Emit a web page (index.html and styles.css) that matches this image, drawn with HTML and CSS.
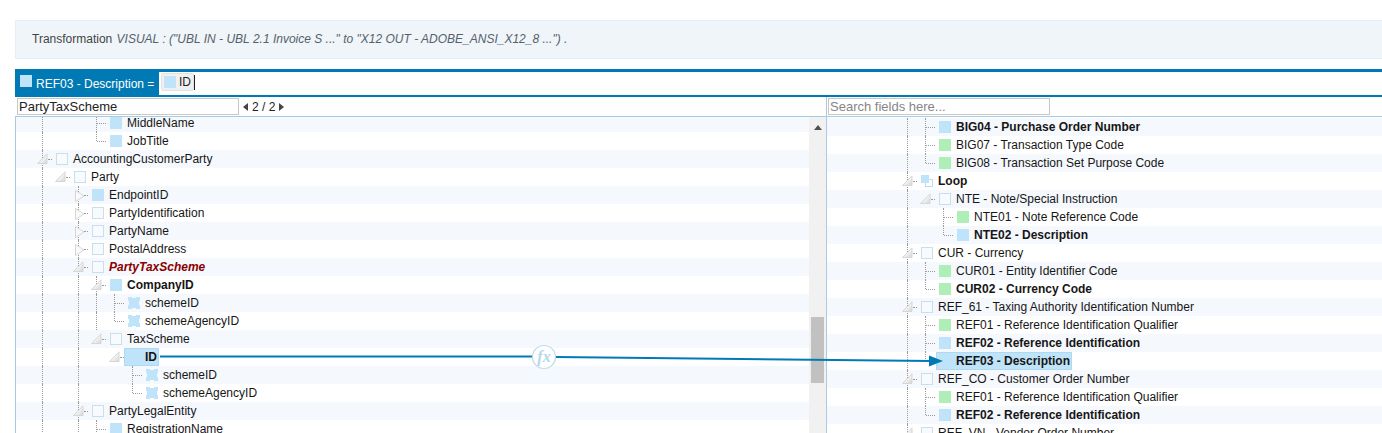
FILE: index.html
```html
<!DOCTYPE html>
<html lang="en">
<head>
<meta charset="utf-8">
<title>Transformation mapping</title>
<link rel="stylesheet" href="styles.css">
</head>
<body>
<svg class="defs" width="0" height="0" aria-hidden="true">
  <defs>
    <linearGradient id="tg" x1="0" y1="0" x2="1" y2="1"><stop offset="0.35" stop-color="#ffffff"/><stop offset="1" stop-color="#d4d4d4"/></linearGradient>
    <symbol id="down" viewBox="0 0 11 11"><path d="M.5 10.5 10 .8v9.7z" fill="url(#tg)" stroke="#d6d6d6"/></symbol>
    <symbol id="right" viewBox="0 0 10 12"><path d="M.5.5 9 6 .5 11.5z" fill="#fafafa" stroke="#d6d6d6"/></symbol>
    <symbol id="attr" viewBox="0 0 12 12"><path d="M0 0h4v1h4V0h4v4h-1v4h1v4H8v-1H4v1H0V8h1V4H0z" fill="#bfe3f8"/></symbol>
    <symbol id="loop" viewBox="0 0 12 12"><rect x="4.5" y="4.5" width="7" height="7" fill="#fff" stroke="#bcdcef"/><rect width="8" height="8" fill="#bfe3f8"/></symbol>
  </defs>
</svg>

<section class="info">Transformation <em>VISUAL : ("UBL IN - UBL 2.1 Invoice S ..." to "X12 OUT - ADOBE_ANSI_X12_8 ...") .</em></section>

<section class="formula">
  <div class="target"><span class="ic blue"></span>REF03 - Description =</div>
  <div class="expr"><span class="chip"><span class="ic blue"></span>ID</span><span class="caret"></span></div>
</section>

<section class="searches">
  <div class="search-left">
    <input class="field" type="text" value="PartyTaxScheme">
    <span class="pager"><svg width="5" height="8" viewBox="0 0 5 8"><path d="M5 0v8L0 4z" fill="#444"/></svg><span>2 / 2</span><svg width="5" height="8" viewBox="0 0 5 8"><path d="M0 0v8l5-4z" fill="#444"/></svg></span>
  </div>
  <div class="search-right"><input class="field" type="text" placeholder="Search fields here..."></div>
</section>

<main class="panes">
  <div class="pane-left">
    <div class="tree tree-l">
      <div class="row"><i class="c v"></i><i class="c"></i><i class="c"></i><i class="c t"></i><span class="ic blue"></span><span class="lb">MiddleName</span></div>
      <div class="row"><i class="c v"></i><i class="c"></i><i class="c"></i><i class="c e"></i><span class="ic blue"></span><span class="lb">JobTitle</span></div>
      <div class="row"><i class="c v tg"><svg class="td"><use href="#down"/></svg></i><span class="ic empty"></span><span class="lb">AccountingCustomerParty</span></div>
      <div class="row"><i class="c v"></i><i class="c tg"><svg class="td"><use href="#down"/></svg></i><span class="ic empty"></span><span class="lb">Party</span></div>
      <div class="row"><i class="c v"></i><i class="c"></i><i class="c v tg"><svg class="tr"><use href="#right"/></svg></i><span class="ic blue"></span><span class="lb">EndpointID</span></div>
      <div class="row"><i class="c v"></i><i class="c"></i><i class="c v tg"><svg class="tr"><use href="#right"/></svg></i><span class="ic empty"></span><span class="lb">PartyIdentification</span></div>
      <div class="row"><i class="c v"></i><i class="c"></i><i class="c v tg"><svg class="tr"><use href="#right"/></svg></i><span class="ic empty"></span><span class="lb">PartyName</span></div>
      <div class="row"><i class="c v"></i><i class="c"></i><i class="c v tg"><svg class="tr"><use href="#right"/></svg></i><span class="ic empty"></span><span class="lb">PostalAddress</span></div>
      <div class="row"><i class="c v"></i><i class="c"></i><i class="c v tg"><svg class="td"><use href="#down"/></svg></i><span class="ic empty"></span><span class="lb found">PartyTaxScheme</span></div>
      <div class="row"><i class="c v"></i><i class="c"></i><i class="c v"></i><i class="c v tg"><svg class="td"><use href="#down"/></svg></i><span class="ic blue"></span><span class="lb req">CompanyID</span></div>
      <div class="row"><i class="c v"></i><i class="c"></i><i class="c v"></i><i class="c v"></i><i class="c t"></i><svg class="ic"><use href="#attr"/></svg><span class="lb">schemeID</span></div>
      <div class="row"><i class="c v"></i><i class="c"></i><i class="c v"></i><i class="c v"></i><i class="c e"></i><svg class="ic"><use href="#attr"/></svg><span class="lb">schemeAgencyID</span></div>
      <div class="row"><i class="c v"></i><i class="c"></i><i class="c v"></i><i class="c tg"><svg class="td"><use href="#down"/></svg></i><span class="ic empty"></span><span class="lb">TaxScheme</span></div>
      <div class="row"><i class="c v"></i><i class="c"></i><i class="c v"></i><i class="c"></i><i class="c tg"><svg class="td"><use href="#down"/></svg></i><span class="sel sel-l"><span class="ic blue"></span><span class="lb req">ID</span></span></div>
      <div class="row"><i class="c v"></i><i class="c"></i><i class="c v"></i><i class="c"></i><i class="c"></i><i class="c t"></i><svg class="ic"><use href="#attr"/></svg><span class="lb">schemeID</span></div>
      <div class="row"><i class="c v"></i><i class="c"></i><i class="c v"></i><i class="c"></i><i class="c"></i><i class="c e"></i><svg class="ic"><use href="#attr"/></svg><span class="lb">schemeAgencyID</span></div>
      <div class="row"><i class="c v"></i><i class="c"></i><i class="c v tg"><svg class="td"><use href="#down"/></svg></i><span class="ic empty"></span><span class="lb">PartyLegalEntity</span></div>
      <div class="row"><i class="c v"></i><i class="c"></i><i class="c v"></i><i class="c t"></i><span class="ic blue"></span><span class="lb">RegistrationName</span></div>
    </div>
    <div class="scrollbar"><svg class="up" width="8" height="5" viewBox="0 0 8 5"><path d="M4 0l4 5H0z" fill="#505050"/></svg><div class="thumb"></div></div>
  </div>
  <div class="tree tree-r">
    <div class="row"><i class="c v"></i><i class="c t"></i><span class="ic blue"></span><span class="lb req">BIG04 - Purchase Order Number</span></div>
    <div class="row"><i class="c v"></i><i class="c t"></i><span class="ic green"></span><span class="lb">BIG07 - Transaction Type Code</span></div>
    <div class="row"><i class="c v"></i><i class="c e"></i><span class="ic green"></span><span class="lb">BIG08 - Transaction Set Purpose Code</span></div>
    <div class="row"><i class="c v tg"><svg class="td"><use href="#down"/></svg></i><svg class="ic"><use href="#loop"/></svg><span class="lb req">Loop</span></div>
    <div class="row"><i class="c v"></i><i class="c tg"><svg class="td"><use href="#down"/></svg></i><span class="ic empty"></span><span class="lb">NTE - Note/Special Instruction</span></div>
    <div class="row"><i class="c v"></i><i class="c"></i><i class="c t"></i><span class="ic green"></span><span class="lb">NTE01 - Note Reference Code</span></div>
    <div class="row"><i class="c v"></i><i class="c"></i><i class="c e"></i><span class="ic blue"></span><span class="lb req">NTE02 - Description</span></div>
    <div class="row"><i class="c v tg"><svg class="td"><use href="#down"/></svg></i><span class="ic empty"></span><span class="lb">CUR - Currency</span></div>
    <div class="row"><i class="c v"></i><i class="c t"></i><span class="ic green"></span><span class="lb">CUR01 - Entity Identifier Code</span></div>
    <div class="row"><i class="c v"></i><i class="c e"></i><span class="ic green"></span><span class="lb req">CUR02 - Currency Code</span></div>
    <div class="row"><i class="c v tg"><svg class="td"><use href="#down"/></svg></i><span class="ic empty"></span><span class="lb">REF_61 - Taxing Authority Identification Number</span></div>
    <div class="row"><i class="c v"></i><i class="c t"></i><span class="ic green"></span><span class="lb">REF01 - Reference Identification Qualifier</span></div>
    <div class="row"><i class="c v"></i><i class="c t"></i><span class="ic blue"></span><span class="lb req">REF02 - Reference Identification</span></div>
    <div class="row"><i class="c v"></i><i class="c e"></i><span class="sel sel-r"><span class="ic blue"></span><span class="lb req">REF03 - Description</span></span></div>
    <div class="row"><i class="c v tg"><svg class="td"><use href="#down"/></svg></i><span class="ic empty"></span><span class="lb">REF_CO - Customer Order Number</span></div>
    <div class="row"><i class="c v"></i><i class="c t"></i><span class="ic green"></span><span class="lb">REF01 - Reference Identification Qualifier</span></div>
    <div class="row"><i class="c v"></i><i class="c e"></i><span class="ic blue"></span><span class="lb req">REF02 - Reference Identification</span></div>
    <div class="row"><i class="c v tg"><svg class="td"><use href="#down"/></svg></i><span class="ic empty"></span><span class="lb">REF_VN - Vendor Order Number</span></div>
  </div>
</main>

<svg class="links" width="1382" height="433" viewBox="0 0 1382 433" aria-hidden="true">
  <path d="M160 356.5H532" fill="none" stroke="#007ab5" stroke-width="2"/>
  <path d="M556 357L931 361" fill="none" stroke="#007ab5" stroke-width="2"/>
  <path d="M929 355.5L943 361L929 366.5z" fill="#007ab5"/>
  <circle cx="544" cy="357" r="11.5" fill="#fff" stroke="#bcdcee" stroke-width="1.2"/>
  <text class="fx" x="544" y="362" text-anchor="middle">fx</text>
</svg>
</body>
</html>
```
FILE: styles.css
```css
html, body { margin: 0; height: 433px; overflow: hidden; background: #fff; }
body {
  position: relative;
  display: flex;
  flex-direction: column;
  padding: 20px 0 0 15px;
  box-sizing: border-box;
  font-family: "Liberation Sans", Arial, sans-serif;
  font-size: 12px;
  color: #161616;
}
.defs { position: absolute; }
.info {
  height: 39px;
  box-sizing: border-box;
  padding-left: 16px;
  line-height: 37px;
  background: #eff5f9;
  border: 1px solid #e5eff5;
  border-right: 0;
  margin-bottom: 10px;
  color: #444;
  flex: none;
  white-space: pre;
}
.info em { color: #56616b; margin-left: 1px; }

.formula {
  flex: none;
  display: flex;
  height: 28px;
  box-sizing: border-box;
  border-top: 3px solid #007ab5;
  border-bottom: 2px solid #007ab5;
  background: #fff;
}
.target {
  width: 144px;
  flex: none;
  box-sizing: border-box;
  display: flex;
  align-items: center;
  padding-left: 5px;
  background: #007ab5;
  color: #fff;
  gap: 4px;
}
.target .ic { margin-top: -5px; }
.expr { display: flex; align-items: flex-start; padding: 1px 0 0 2px; }
.chip {
  display: flex;
  align-items: center;
  width: 33px;
  height: 18px;
  box-sizing: border-box;
  padding-left: 2px;
  gap: 3px;
  background: #f0f0f0;
  border: 1px solid #e2e2e2;
  border-radius: 2px;
  color: #222;
}
.caret { width: 1px; height: 15px; background: #222; margin-top: 2px; }

.searches { flex: none; display: flex; height: 20px; }
.search-left {
  width: 812px;
  flex: none;
  box-sizing: border-box;
  display: flex;
  align-items: flex-start;
  padding: 1px 0 0 2px;
  border-right: 1px solid #a9cbe0;
  border-bottom: 1px solid #a9cbe0;
}
.search-right { flex: 1; padding: 1px 0 0 1px; border-bottom: 1px solid #a9cbe0; }
.field {
  display: block;
  box-sizing: border-box;
  width: 222px;
  height: 17px;
  margin: 0;
  padding: 0 1px;
  border: 1px solid #c8c8c8;
  background: #fff;
  font: 13px "Liberation Sans", Arial, sans-serif;
  color: #222;
  outline: 0;
}
.field::placeholder { color: #858585; opacity: 1; }
.pager { display: flex; align-items: center; gap: 4px; height: 17px; margin-left: 4px; color: #222; }

.panes { flex: 1; min-height: 0; display: flex; overflow: hidden; }
.pane-left {
  width: 812px;
  flex: none;
  box-sizing: border-box;
  display: flex;
  border-left: 1px solid #a9cbe0;
  border-right: 1px solid #a9cbe0;
}
.tree { min-width: 0; flex: 1; overflow: hidden; }
.tree-l { margin-top: -3px; overflow: visible; }
.tree-l .row { padding-left: 22px; }
.tree-r { padding-top: 1px; }
.tree-r .row { padding-left: 76px; }
.row {
  display: flex;
  align-items: center;
  height: 18px;
  background: #fff;
}
.tree-l .row:nth-child(odd), .tree-r .row:nth-child(odd) { background: #f5f8fc; }

.c { display: block; position: relative; flex: none; width: 18px; height: 18px; }
.v::before, .t::before, .e::before {
  content: "";
  position: absolute;
  left: 4px;
  top: 0;
  bottom: 0;
  border-left: 1px dotted #9a9a9a;
}
.e::before { bottom: 9px; }
.t::after, .e::after, .tg::after {
  content: "";
  position: absolute;
  left: 5px;
  width: 9px;
  top: 9px;
  border-top: 1px dotted #9a9a9a;
}
.tg::after { left: 10px; width: 4px; }
.td { position: absolute; left: -1px; top: 3px; width: 11px; height: 11px; }
.tr { position: absolute; left: 1px; top: 4px; width: 10px; height: 12px; }

.ic { display: block; flex: none; width: 12px; height: 12px; box-sizing: border-box; }
.blue { background: #bfe3f8; }
.green { background: #b0eeb8; }
.empty { background: #f8fbfd; border: 1px solid #c9dfee; }
.lb { margin-left: 5px; white-space: nowrap; line-height: 18px; }
.req { font-weight: bold; }
.found { font-weight: bold; font-style: italic; color: #8b0000; }
.sel {
  display: flex;
  align-items: center;
  height: 18px;
  padding-right: 2px;
  background: #bfe3f8;
  box-shadow: inset 0 0 0 1px #aed9f4;
  border-radius: 1px;
}
.sel-l { margin-left: -4px; padding-left: 4px; }
.sel-r { margin-left: -3px; padding-left: 3px; }

.scrollbar { flex: none; width: 17px; background: #f1f1f1; box-sizing: border-box; margin-left: auto; }
.up { display: block; margin: 8px 0 0 5px; }
.thumb { width: 13px; height: 66px; margin: 187px 0 0 2px; background: #c1c1c1; }
.pane-left .tree { width: 793px; }

.links { position: absolute; left: 0; top: 0; pointer-events: none; }
.fx { font: italic bold 16px "Liberation Serif", serif; fill: #b4d8ec; }
```
